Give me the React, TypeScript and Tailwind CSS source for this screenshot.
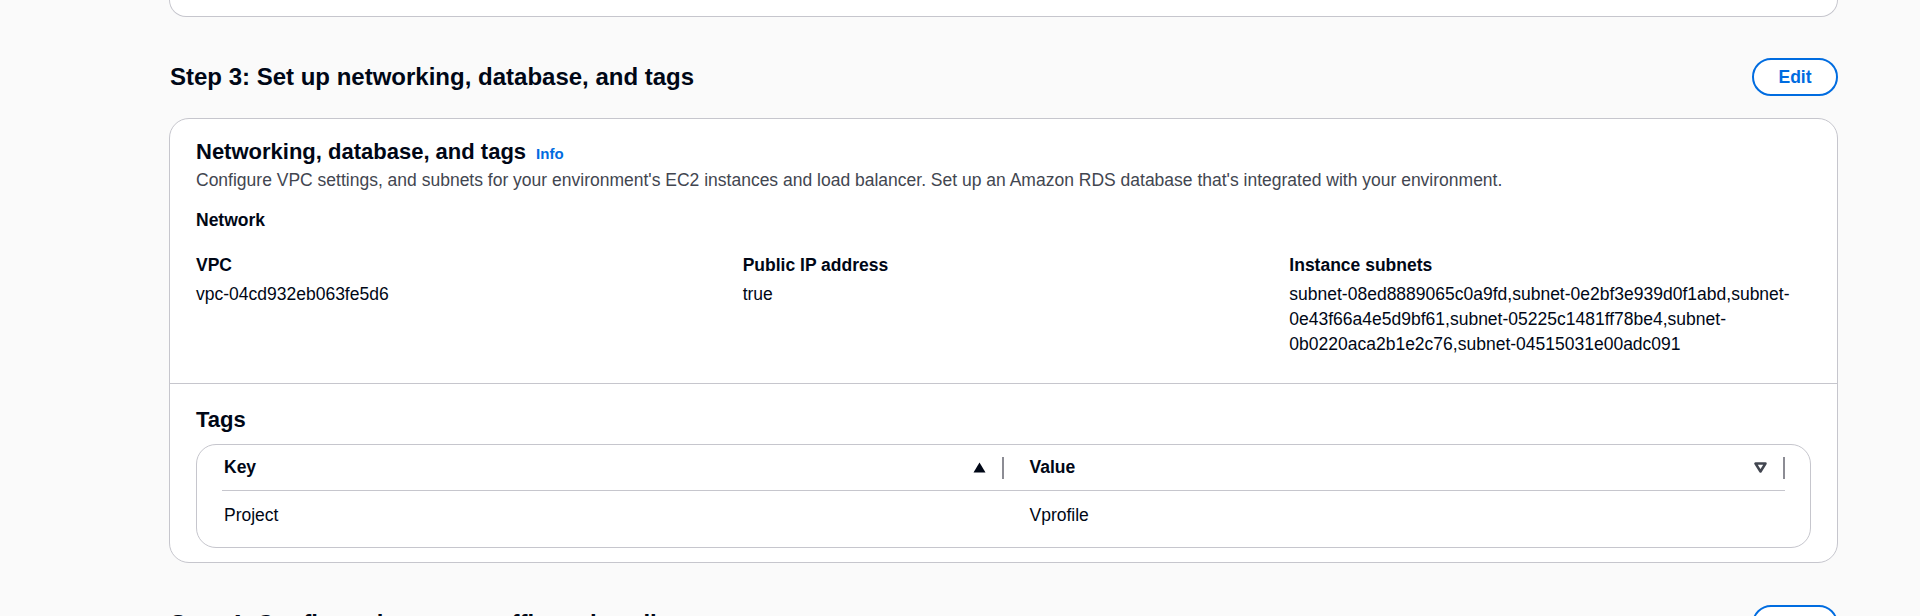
import React from 'react';

const subnets = [
  'subnet-08ed8889065c0a9fd',
  'subnet-0e2bf3e939d0f1abd',
  'subnet-0e43f66a4e5d9bf61',
  'subnet-05225c1481ff78be4',
  'subnet-0b0220aca2b1e2c76',
  'subnet-04515031e00adc091',
];

const EditButton = () => (
  <button className="h-[38px] w-[86px] rounded-full border-2 border-[#006ce0] bg-white text-[17.5px] font-bold leading-[25px] text-[#006ce0]">
    Edit
  </button>
);

const SortUp = () => (
  <svg width="13" height="11" viewBox="0 0 13 11">
    <polygon points="6.5,0.5 12.5,10.5 0.5,10.5" fill="#000716" />
  </svg>
);

const SortDown = () => (
  <svg width="13" height="11" viewBox="0 0 13 11">
    <polygon
      points="1.5,1.5 11.5,1.5 6.5,9.5"
      fill="none"
      stroke="#424650"
      strokeWidth="2.5"
      strokeLinejoin="round"
    />
  </svg>
);

const Field = ({ label, children }: { label: string; children: React.ReactNode }) => (
  <div className="min-w-0">
    <div className="text-[17.5px] font-bold leading-[25px]">{label}</div>
    <div className="mt-[4px] break-words text-[17.5px] leading-[25px]">{children}</div>
  </div>
);

const App = () => {
  return (
    <div className="min-h-screen overflow-hidden bg-[#fafafa] font-['Liberation_Sans',Arial,sans-serif] text-[#000716]">
      <div className="ml-[169px] w-[1669px]">
        {/* end of previous step card */}
        <div className="h-[17px] rounded-b-[20px] border border-t-0 border-[#c6c6cd] bg-white" />

        {/* Step 3 */}
        <section className="mt-[41px]">
          <div className="flex h-[38px] items-center justify-between">
            <h2 className="pl-px text-[24px] font-bold leading-[30px]">
              Step 3: Set up networking, database, and tags
            </h2>
            <EditButton />
          </div>

          <div className="mt-[22px] rounded-[20px] border border-[#c6c6cd] bg-white">
            <div className="px-[26px] pb-[26px] pt-[19px]">
              <div className="flex items-baseline gap-[10px]">
                <h3 className="text-[22px] font-bold leading-[28px]">Networking, database, and tags</h3>
                <a className="text-[15px] font-bold leading-[20px] text-[#006ce0]">Info</a>
              </div>
              <p className="mt-[2px] text-[17.5px] leading-[25px] text-[#424650]">
                Configure VPC settings, and subnets for your environment's EC2 instances and load balancer. Set up an
                Amazon RDS database that's integrated with your environment.
              </p>
              <div className="mt-[15px] text-[17.5px] font-bold leading-[25px]">Network</div>
              <div className="mt-[20px] grid grid-cols-3 gap-x-[25px]">
                <Field label="VPC">vpc-04cd932eb063fe5d6</Field>
                <Field label="Public IP address">true</Field>
                <Field label="Instance subnets">
                  {subnets.map((s, i) => (
                    <React.Fragment key={s}>
                      {i > 0 && ','}
                      subnet-
                      <wbr />
                      {s.slice(7)}
                    </React.Fragment>
                  ))}
                </Field>
              </div>
            </div>

            <div className="border-t border-[#c6c6cd] px-[26px] pb-[14px] pt-[22px]">
              <h3 className="text-[22px] font-bold leading-[28px]">Tags</h3>
              <div className="mt-[10px] rounded-[20px] border border-[#c6c6cd] px-[25px] pb-[7px]">
                <div className="grid grid-cols-2 border-b border-[#c6c6cd] py-[10px] text-[17.5px] font-bold leading-[25px]">
                  <div className="flex items-center pl-[2px]">
                    <span className="flex-1">Key</span>
                    <SortUp />
                    <span className="ml-[16px] h-[22px] w-[2px] bg-[#8c8c94]" />
                  </div>
                  <div className="flex items-center pl-[26px]">
                    <span className="flex-1">Value</span>
                    <SortDown />
                    <span className="ml-[16px] h-[22px] w-[2px] bg-[#8c8c94]" />
                  </div>
                </div>
                <div className="grid grid-cols-2 py-[12px] text-[17.5px] leading-[25px]">
                  <div className="pl-[2px]">Project</div>
                  <div className="pl-[26px]">Vprofile</div>
                </div>
              </div>
            </div>
          </div>
        </section>

        {/* Step 4 */}
        <section className="mt-[42px]">
          <div className="flex h-[38px] items-center justify-between">
            <h2 className="pl-px text-[24px] font-bold leading-[30px]">
              Step 4: Configure instance traffic and scaling
            </h2>
            <EditButton />
          </div>
        </section>
      </div>
    </div>
  );
};

export default App;
